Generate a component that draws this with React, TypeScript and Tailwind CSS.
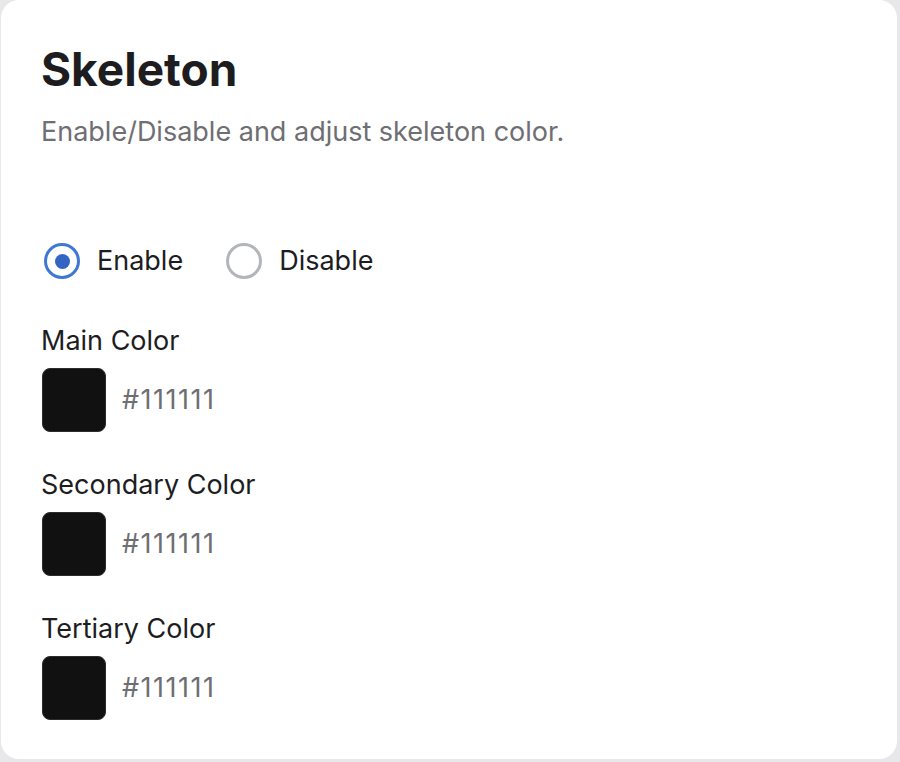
import { useState } from 'react';

const colorFields = [
  { label: 'Main Color', value: '#111111' },
  { label: 'Secondary Color', value: '#111111' },
  { label: 'Tertiary Color', value: '#111111' },
];

function Radio({ checked, label, onClick }: { checked: boolean; label: string; onClick: () => void }) {
  return (
    <button type="button" onClick={onClick} className="flex items-center gap-[17px]">
      <span
        className={`flex h-[36px] w-[36px] items-center justify-center rounded-full border-[3px] ${
          checked ? 'border-[#3f78d4]' : 'border-[#b2b5ba]'
        }`}
      >
        {checked && <span className="h-[15px] w-[15px] rounded-full bg-[#3366c2]" />}
      </span>
      <span className="text-[27px] leading-[32px] text-[#1d1d1f]">{label}</span>
    </button>
  );
}

export default function App() {
  const [enabled, setEnabled] = useState(true);

  return (
    <div className="h-[762px] w-[900px] bg-[#e8e8ea] font-['Inter',sans-serif]">
      <div className="ml-px h-[759px] w-[896px] rounded-[18px] bg-white pl-[41px] pt-[41px]">
        <h1 className="-ml-px text-[46px] font-bold leading-[56px] text-[#1d1d1f]">Skeleton</h1>
        <p className="-ml-px mt-[19px] text-[27px] leading-[32px] text-[#6e6e73]">
          Enable/Disable and adjust skeleton color.
        </p>

        {/* Вкл/выкл */}
        <div className="mt-[95px] flex items-center gap-[43px] pl-[2px]">
          <Radio checked={enabled} label="Enable" onClick={() => setEnabled(true)} />
          <Radio checked={!enabled} label="Disable" onClick={() => setEnabled(false)} />
        </div>

        <div className="mt-[46px] flex flex-col gap-[37px]">
          {colorFields.map((field) => (
            <div key={field.label}>
              <div className="-ml-px text-[27px] leading-[32px] text-[#1d1d1f]">{field.label}</div>
              <div className="mt-[11px] flex items-center gap-[16px]">
                <div className="h-[64px] w-[64px] rounded-[8px] border border-[#2c2c2c] bg-[#111111]" />
                <span className="text-[27px] leading-[32px] tracking-[1.5px] text-[#6e6e73]">{field.value}</span>
              </div>
            </div>
          ))}
        </div>
      </div>
    </div>
  );
}
